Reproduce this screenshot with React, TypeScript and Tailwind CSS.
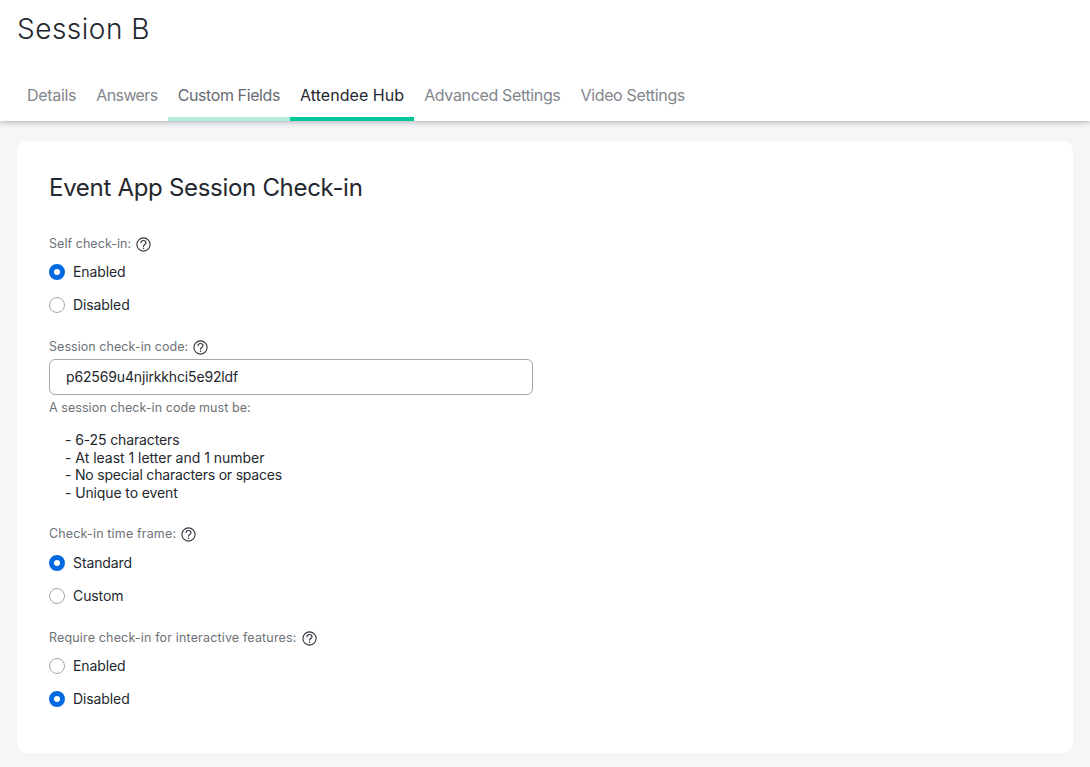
import React from 'react';

const tabs = [
  { label: 'Details', cls: 'text-[#82868c] border-transparent tracking-[-0.3px]' },
  { label: 'Answers', cls: 'text-[#82868c] border-transparent tracking-[-0.6px]' },
  { label: 'Custom Fields', cls: 'text-[#686c72] border-[#b2ecdf] tracking-[-0.4px]' },
  { label: 'Attendee Hub', cls: 'text-[#24282e] border-[#00c89b] tracking-[0.05px]' },
  { label: 'Advanced Settings', cls: 'text-[#82868c] border-transparent tracking-[-0.35px]' },
  { label: 'Video Settings', cls: 'text-[#82868c] border-transparent tracking-[-0.35px]' },
];

function Help() {
  return (
    <svg width="15" height="15" viewBox="0 0 15 15" fill="none" className="ml-[5px]">
      <circle cx="7.5" cy="7.5" r="6.6" stroke="#30353b" strokeWidth="1.1" />
      <path d="M5 5.8c0-1.4 1.1-2.3 2.5-2.3s2.5.9 2.5 2.2c0 1.8-2.5 1.7-2.5 3.5" stroke="#30353b" strokeWidth="1.1" strokeLinecap="round" />
      <circle cx="7.5" cy="11.3" r=".75" fill="#30353b" />
    </svg>
  );
}

function Label({ text, tight }: { text: string; tight?: boolean }) {
  return (
    <div className={`flex items-center h-[17px] text-[12.5px] text-[#6d7278] ${tight ? 'tracking-[0.05px]' : 'tracking-[0.16px]'}`}>
      {text}
      <Help />
    </div>
  );
}

function Radio({ label, checked }: { label: string; checked?: boolean }) {
  return (
    <div className="flex items-center h-[33px]">
      {checked ? (
        <span className="w-4 h-4 rounded-full border-[5px] border-[#0069e0] bg-white" />
      ) : (
        <span className="w-4 h-4 rounded-full border border-[#a4a8ae] bg-white" />
      )}
      <span className="ml-2 text-sm tracking-[-0.1px] text-[#24282e]">{label}</span>
    </div>
  );
}

export default function App() {
  return (
    <div className="font-['Inter',sans-serif] w-[1090px] h-[767px] overflow-hidden bg-[#f5f6f8]">
      <header className="relative h-[121px] bg-white shadow-[0_1px_6px_rgba(0,0,0,0.3)]">
        <h1 className="pl-[17px] pt-[11px] h-[79px] text-[28px] leading-[36px] font-light tracking-[0.5px] text-[#24282e]">
          Session B
        </h1>
        <nav className="flex h-[42px]">
          <div className="w-[17px]" />
          {tabs.map((t) => (
            <div
              key={t.label}
              className={`px-[10px] pt-[4px] text-base leading-6 border-b-4 ${t.cls}`}
            >
              {t.label}
            </div>
          ))}
        </nav>
      </header>

      <main className="mx-[17px] mt-[20px] w-[1056px] h-[612px] rounded-[10px] bg-white pl-8 pt-[32px]">
        <h2 className="text-2xl leading-[30px] tracking-[-0.3px] text-[#24282e]">Event App Session Check-in</h2>

        <div className="mt-[33px]">
          <Label text="Self check-in:" tight />
        </div>
        <div className="mt-[2px]">
          <Radio label="Enabled" checked />
          <Radio label="Disabled" />
        </div>

        <div className="mt-[18px]">
          <Label text="Session check-in code:" tight />
        </div>
        <input
          readOnly
          value="p62569u4njirkkhci5e92ldf"
          className="mt-[3px] block w-[484px] h-9 px-4 pb-[2px] rounded-md border border-[#a4a8ae] text-sm tracking-[-0.15px] text-[#24282e] outline-none"
        />
        <p className="mt-[4px] h-[17px] text-[12.5px] leading-[17px] tracking-[0.06px] text-[#6d7278]">A session check-in code must be:</p>
        <ul className="mt-[15px] pl-4 text-sm leading-[17.5px] tracking-[-0.12px] text-[#24282e]">
          <li>- 6-25 characters</li>
          <li className="tracking-[-0.02px]">- At least 1 letter and 1 number</li>
          <li className="tracking-[-0.2px]">- No special characters or spaces</li>
          <li>- Unique to event</li>
        </ul>

        <div className="mt-[25px]">
          <Label text="Check-in time frame:" />
        </div>
        <div className="mt-[3px]">
          <Radio label="Standard" checked />
          <Radio label="Custom" />
        </div>

        <div className="mt-[18px]">
          <Label text="Require check-in for interactive features:" />
        </div>
        <div className="mt-[2px]">
          <Radio label="Enabled" />
          <Radio label="Disabled" checked />
        </div>
      </main>
    </div>
  );
}
